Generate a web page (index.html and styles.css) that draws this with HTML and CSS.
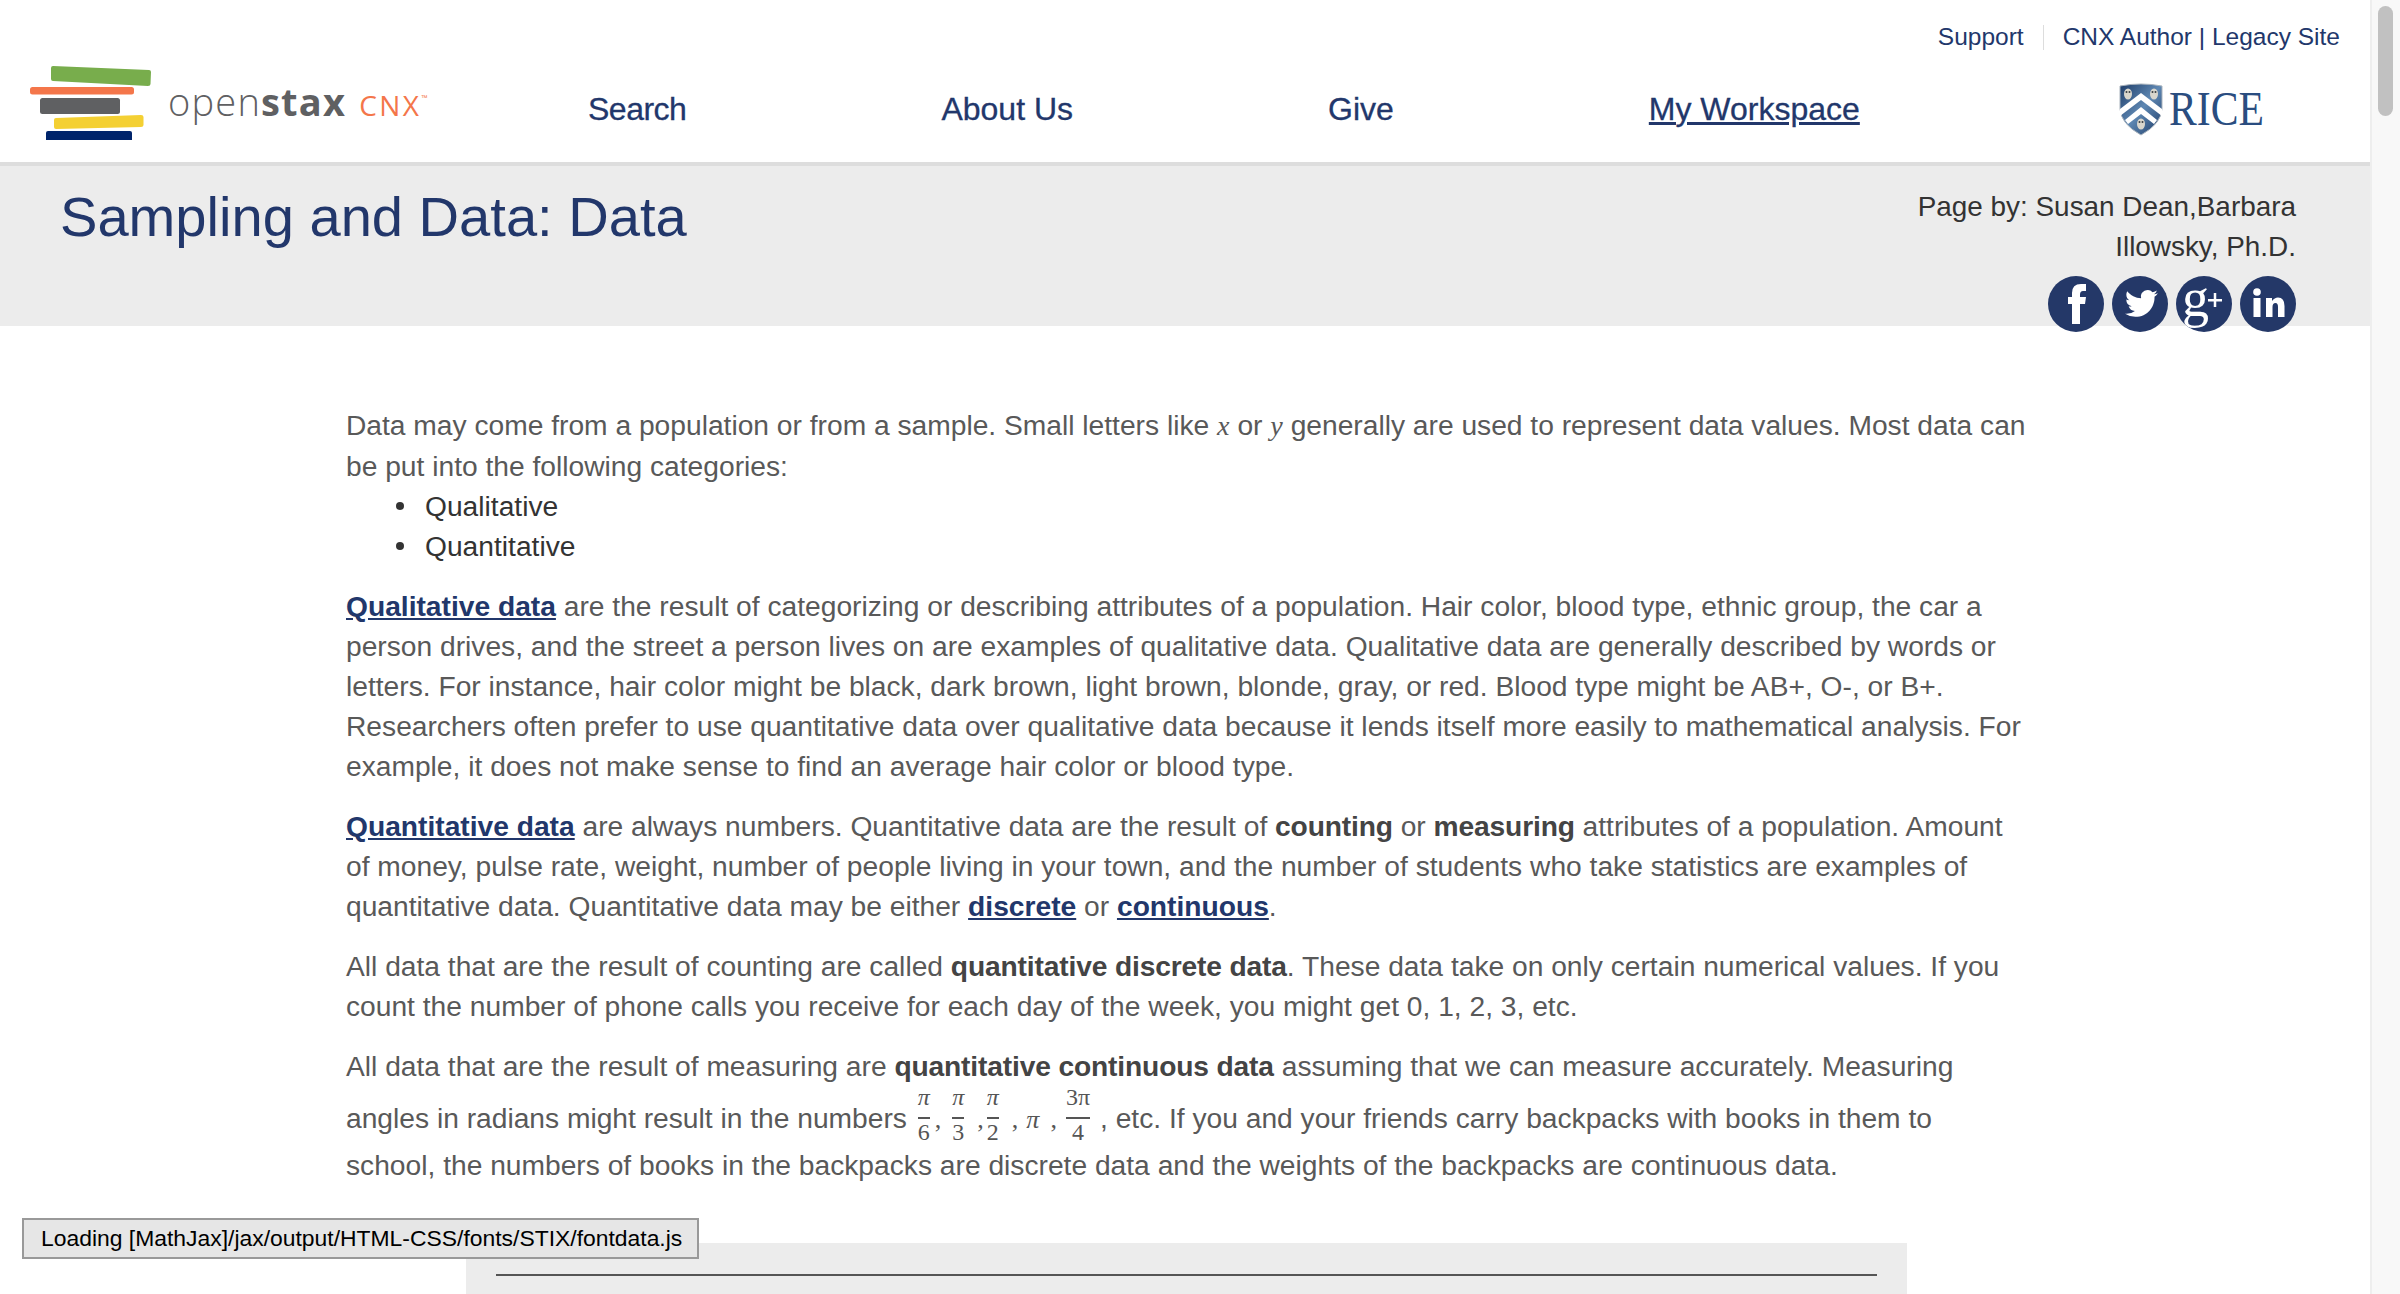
FILE: index.html
```html
<!DOCTYPE html>
<html lang="en">
<head>
<meta charset="utf-8">
<title>Sampling and Data: Data</title>
<link rel="stylesheet" href="styles.css">
</head>
<body>
<div class="page">
  <header class="site-header">
    <div class="utility">
      <a href="#">Support</a>
      <span class="util-sep"></span>
      <a href="#">CNX Author | Legacy Site</a>
    </div>
    <div class="mainbar">
      <a class="brand" href="#">
        <svg class="brand-mark" viewBox="0 0 121 74" width="121" height="74" aria-hidden="true">
          <path d="M23 0 L119 4 Q121 4 121 6 L120.500 18 Q120.500 20 118 20 L23 15 Q21 15 21 13 L21 2 Q21 0 23 0 Z" fill="#78ad4c"/>
          <rect x="0" y="21" width="104" height="7.500" rx="2.500" fill="#f4764a"/>
          <rect x="10" y="32" width="80" height="16" rx="2.500" fill="#5f6062"/>
          <path d="M26 52 L111 49 Q113.500 49 113.500 51 L113.500 59 Q113.500 61 111 61 L26 63 Q24 63 24 61 L24 54 Q24 52 26 52 Z" fill="#f4d033"/>
          <path d="M18 65 L100 65 Q102 65 102 67 L102 74 L16 74 L16 67 Q16 65 18 65 Z" fill="#00246b"/>
        </svg>
        <span class="brand-text"><span class="brand-name">open<b>stax</b></span><span class="brand-cnx">CNX<sup>™</sup></span></span>
      </a>
      <nav class="nav">
        <a class="nav-search" href="#">Search</a>
        <a href="#">About Us</a>
        <a href="#">Give</a>
        <a class="current" href="#">My Workspace</a>
      </nav>
      <a class="rice" href="#">
        <svg viewBox="0 0 44 53" width="44" height="53" aria-hidden="true">
          <defs>
            <linearGradient id="shieldfill" x1="0" y1="0" x2="1" y2="1">
              <stop offset="0" stop-color="#1d3c68"/>
              <stop offset=".5" stop-color="#5f88b3"/>
              <stop offset="1" stop-color="#1c3a66"/>
            </linearGradient>
          </defs>
          <path d="M1 3 Q22 -1 43 3 L43 26 Q42 41 22 52 Q2 41 1 26 Z" fill="url(#shieldfill)" stroke="#a9b3bd"/>
          <path d="M1 26 L22 10 L43 26 L43 33 L22 17 L1 33 Z" fill="#fff"/>
          <path d="M6 37 L22 24 L38 37 L35 41 L22 31 L9 41 Z" fill="#fff"/>
          <g fill="#d9d6cc">
            <ellipse cx="9" cy="11" rx="4" ry="5.500"/>
            <ellipse cx="35" cy="11" rx="4" ry="5.500"/>
            <ellipse cx="22" cy="41" rx="4" ry="5.500"/>
          </g>
          <g fill="#3a3f44">
            <circle cx="7.500" cy="9" r="1"/><circle cx="10.500" cy="9" r="1"/>
            <circle cx="33.500" cy="9" r="1"/><circle cx="36.500" cy="9" r="1"/>
            <circle cx="20.500" cy="39" r="1"/><circle cx="23.500" cy="39" r="1"/>
          </g>
        </svg>
        <span class="rice-word">RICE</span>
      </a>
    </div>
  </header>

  <section class="title-band">
    <h1>Sampling and Data: Data</h1>
    <div class="byline">
      <p>Page by: Susan Dean,Barbara Illowsky, Ph.D.</p>
      <div class="social">
        <svg viewBox="0 0 56 56" width="56" height="56" aria-label="Facebook">
          <circle cx="28" cy="28" r="28" fill="#243868"/>
          <path d="M24 48 V28 H20 V21 H24 V17 Q24 8 33 8 H38 V15 H35 Q32 15 32 18.500 V21 H38 L37 28 H32 V48 Z" fill="#fff"/>
        </svg>
        <svg viewBox="0 0 56 56" width="56" height="56" aria-label="Twitter">
          <circle cx="28" cy="28" r="28" fill="#243868"/>
          <g transform="translate(13 11) scale(1.370)">
            <path d="M23.953 4.570a10 10 0 01-2.825.775 4.958 4.958 0 002.163-2.723c-.951.555-2.005.959-3.127 1.184a4.920 4.920 0 00-8.384 4.482C7.690 8.095 4.067 6.130 1.640 3.162a4.822 4.822 0 00-.666 2.475c0 1.710.870 3.213 2.188 4.096a4.904 4.904 0 01-2.228-.616v.060a4.923 4.923 0 003.946 4.827 4.996 4.996 0 01-2.212.085 4.936 4.936 0 004.604 3.417 9.867 9.867 0 01-6.102 2.105c-.390 0-.779-.023-1.170-.067a13.995 13.995 0 007.557 2.209c9.053 0 13.998-7.496 13.998-13.985 0-.210 0-.420-.015-.630A9.935 9.935 0 0024 4.590z" fill="#fff"/>
          </g>
        </svg>
        <svg viewBox="0 0 56 56" width="56" height="56" aria-label="Google Plus">
          <defs><clipPath id="gclip"><circle cx="28" cy="28" r="28"/></clipPath></defs>
          <circle cx="28" cy="28" r="28" fill="#243868"/>
          <g clip-path="url(#gclip)" fill="#fff">
            <text class="glyph-g" x="6" y="40">g</text>
            <rect x="32" y="23" width="14" height="2.500"/>
            <rect x="37.750" y="17" width="2.500" height="14"/>
          </g>
        </svg>
        <svg viewBox="0 0 56 56" width="56" height="56" aria-label="LinkedIn">
          <circle cx="28" cy="28" r="28" fill="#243868"/>
          <circle cx="17" cy="16" r="3.800" fill="#fff"/>
          <rect x="13.500" y="22" width="7" height="19" fill="#fff"/>
          <path d="M26 22 H32 V25 Q34.500 21.500 38 21.500 Q44.500 21.500 44.500 30 V41 H38 V31 Q38 27 35.500 27 Q32.500 27 32.500 31 V41 H26 Z" fill="#fff"/>
        </svg>
      </div>
    </div>
  </section>

  <main class="content">
    <p class="tight">Data may come from a population or from a sample. Small letters like <i class="mvar">x</i> or <i class="mvar">y</i> generally are used to represent data values. Most data can be put into the following categories:</p>
    <ul>
      <li>Qualitative</li>
      <li>Quantitative</li>
    </ul>
    <p><a href="#">Qualitative data</a> are the result of categorizing or describing attributes of a population. Hair color, blood type, ethnic group, the car a person drives, and the street a person lives on are examples of qualitative data. Qualitative data are generally described by words or letters. For instance, hair color might be black, dark brown, light brown, blonde, gray, or red. Blood type might be AB+, O-, or B+. Researchers often prefer to use quantitative data over qualitative data because it lends itself more easily to mathematical analysis. For example, it does not make sense to find an average hair color or blood type.</p>
    <p><a href="#">Quantitative data</a> are always numbers. Quantitative data are the result of <b>counting</b> or <b>measuring</b> attributes of a population. Amount of money, pulse rate, weight, number of people living in your town, and the number of students who take statistics are examples of quantitative data. Quantitative data may be either <a href="#">discrete</a> or <a href="#">continuous</a>.</p>
    <p>All data that are the result of counting are called <b>quantitative discrete data</b>. These data take on only certain numerical values. If you count the number of phone calls you receive for each day of the week, you might get 0, 1, 2, 3, etc.</p>
    <p>All data that are the result of measuring are <b>quantitative continuous data</b> assuming that we can measure accurately. Measuring angles in radians might result in the numbers <span class="frac ml3"><i>π</i><span>6</span></span><span class="mc ml5">,</span><span class="frac ml11"><i>π</i><span>3</span></span><span class="mc ml13">,</span><span class="frac ml3"><i>π</i><span>2</span></span><span class="mc ml13">,</span><i class="mc pi ml8">π</i><span class="mc ml11">,</span><span class="frac ml9"><span>3π</span><span>4</span></span><span class="after-math">, etc.</span> If you and your friends carry backpacks with books in them to<br>school, the numbers of books in the backpacks are discrete data and the weights of the backpacks are continuous data.</p>
    <div class="example"><hr></div>
  </main>
</div>
<div class="mathjax-status">Loading [MathJax]/jax/output/HTML-CSS/fonts/STIX/fontdata.js</div>
<div class="scrollbar"><div class="thumb"></div></div>
</body>
</html>
```
FILE: styles.css
```css
* { box-sizing: border-box; }
html, body { margin: 0; padding: 0; height: 100%; overflow: hidden; background: #fff; }
body { font-family: "Liberation Sans", Arial, sans-serif; color: #595959; }
a { color: #22376b; }
.page { width: 2370px; }

.site-header { height: 166px; border-bottom: 4px solid #ddd; background: #fff; }
.utility { display: flex; justify-content: flex-end; align-items: center; height: 56px; padding: 18px 30px 0 0; font-size: 24.5px; }
.utility a { text-decoration: none; }
.util-sep { width: 1px; height: 25px; background: #ddd; margin: 0 19px; }
.mainbar { display: flex; align-items: center; height: 106px; padding-left: 30px; }
.brand { display: flex; align-items: center; width: 558px; margin-top: -12px; text-decoration: none; flex: none; }
.brand-text { margin: -4px 0 0 17px; white-space: nowrap; }
.brand-name { font: 300 38px "Open Sans", sans-serif; color: #5f6062; letter-spacing: 1.200px; }
.brand-name b { font-weight: 700; letter-spacing: 1.200px; }
.brand-cnx { margin-left: 13px; font: 400 28px "Open Sans", sans-serif; letter-spacing: 2.500px; color: #f4764a; }
.brand-cnx sup { font-size: 8px; letter-spacing: 0; vertical-align: 15px; line-height: 0; }
.nav { display: flex; gap: 255px; font-size: 32px; flex: none; }
.nav a { text-decoration: none; -webkit-text-stroke: .3px #22376b; }
.nav a.current { text-decoration: underline; }
.nav a.nav-search { letter-spacing: -.5px; }
.rice { display: flex; align-items: center; gap: 6px; margin-left: 259px; text-decoration: none; }
.rice-word { display: inline-block; margin-top: -2px; color: #2a4d80; font: 400 49px "Liberation Serif", serif; transform: scaleX(.85); transform-origin: left center; }

.title-band { display: flex; justify-content: space-between; height: 160px; padding: 0 74px 0 60px; background: #ececec; }
h1 { margin: 0; padding-top: 19px; font-size: 56.100px; line-height: 64px; font-weight: 400; color: #22376b; }
.byline { width: 400px; color: #333; font-size: 27.900px; line-height: 40px; text-align: right; padding-top: 21px; }
.byline p { margin: 0; }
.social { display: flex; justify-content: flex-end; gap: 8px; margin: 9px 0 0 0; }
.glyph-g { font: 400 54px "Liberation Serif", serif; }

.content { padding: 79px 0 0 346px; width: 2030px; font-size: 28.200px; line-height: 40px; }
.content p { margin: 0 0 20px; }
.content p.tight { margin: 0; }
.content b { color: #444; letter-spacing: -.15px; }
.content a { font-weight: 700; }
.mvar { font-family: "Liberation Serif", serif; }
ul { margin: 0 0 20px; padding: 0 0 0 50px; color: #333; list-style: none; }
li { display: flex; align-items: center; gap: 21px; }
li::before { content: ""; width: 8px; height: 8px; border-radius: 50%; background: #333; }

.frac { display: inline-flex; flex-direction: column; vertical-align: 23px; text-align: center; font: 24px "Liberation Serif", serif; color: #555; }
.frac > :first-child { line-height: 23px; padding-bottom: 8px; border-bottom: 2px solid #555; }
.frac > :last-child { line-height: 26px; }
.mc { font: 26px "Liberation Serif", serif; color: #555; }
.pi { font-style: italic; }
.after-math { margin-left: 10px; }
.ml3 { margin-left: 3px; }
.ml5 { margin-left: 5px; }
.ml8 { margin-left: 8px; }
.ml9 { margin-left: 9px; }
.ml11 { margin-left: 11px; }
.ml13 { margin-left: 13px; }

.example { width: 1441px; height: 100px; margin: 58px 0 0 120px; padding: 31px 30px 0; background: #ececec; }
.example hr { margin: 0; border: 0; height: 2px; background: #555; }

.mathjax-status { position: fixed; left: 22px; top: 1218px; width: 677px; height: 41px; padding-left: 17px; background: #e6e6e6; border: 2px solid #999; color: #000; font-size: 22.900px; line-height: 37px; white-space: nowrap; }
.scrollbar { position: fixed; right: 0; top: 0; width: 30px; height: 100%; background: #f8f8f8; border-left: 2px solid #eee; }
.thumb { position: absolute; left: 6px; top: 6px; width: 15px; height: 110px; border-radius: 8px; background: #c1c1c1; }
```
